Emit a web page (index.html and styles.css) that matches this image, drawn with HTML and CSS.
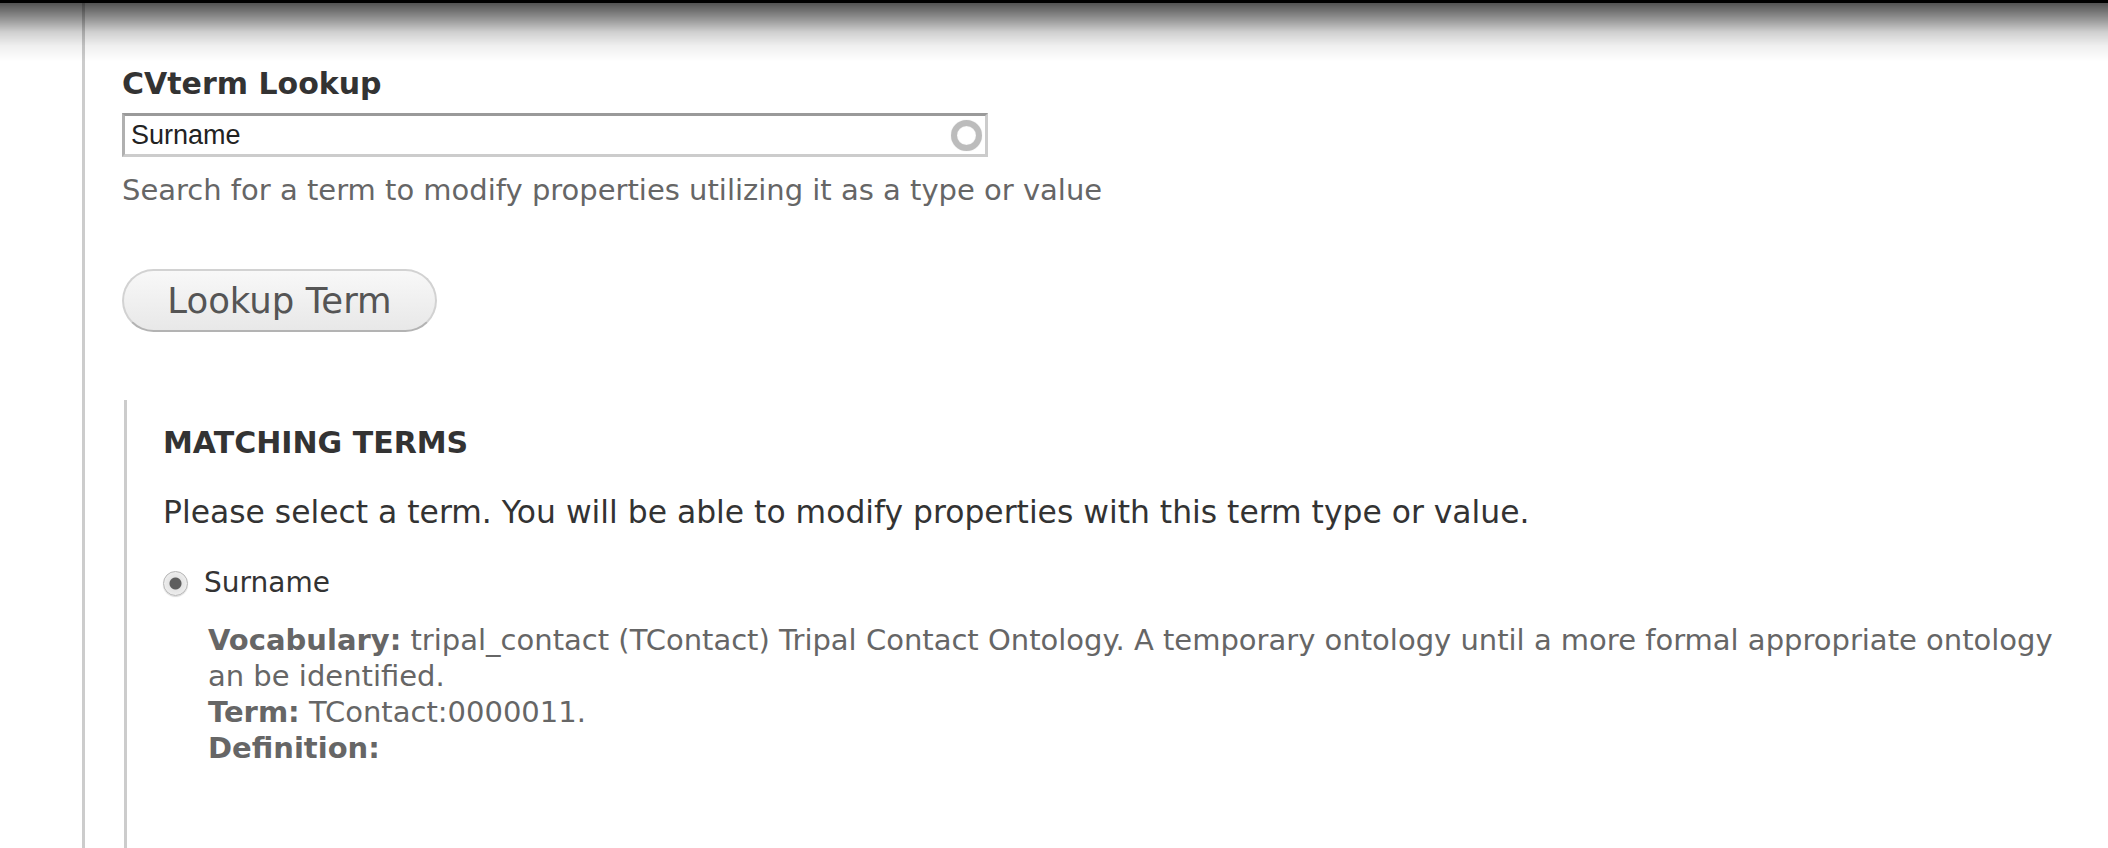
FILE: index.html
```html
<!DOCTYPE html>
<html lang="en">
<head>
<meta charset="utf-8">
<title>CVterm Lookup</title>
<link rel="stylesheet" href="styles.css">
</head>
<body>
<div class="topshade"></div>
<div class="page">
  <form class="lookup">
    <label class="field-label" for="cvterm">CVterm Lookup</label>
    <div class="autocomplete">
      <input id="cvterm" class="text-input" type="text" value="Surname">
      <span class="throbber"></span>
    </div>
    <div class="field-desc">Search for a term to modify properties utilizing it as a type or value</div>
    <button class="btn" type="button">Lookup Term</button>
    <div class="matches">
      <h2 class="matches-title">MATCHING TERMS</h2>
      <p class="matches-intro">Please select a term. You will be able to modify properties with this term type or value.</p>
      <label class="radio-row"><input type="radio" class="radio" name="term" checked><span>Surname</span></label>
      <div class="term-info">
        <div class="term-line"><b>Vocabulary:</b> tripal_contact (TContact) Tripal Contact Ontology. A temporary ontology until a more formal appropriate ontology an be identified.</div>
        <div class="term-line"><b>Term:</b> TContact:0000011.</div>
        <div class="term-line"><b>Definition:</b></div>
      </div>
    </div>
  </form>
</div>
</body>
</html>
```

FILE: styles.css
```css
html, body {
  margin: 0;
  padding: 0;
  background: #fff;
  overflow: hidden;
}

body {
  font-family: "DejaVu Sans", "Open Sans", sans-serif;
  color: #333;
}

.topshade {
  position: fixed;
  top: 0;
  left: 0;
  right: 0;
  height: 62px;
  z-index: 10;
  pointer-events: none;
  background: linear-gradient(to bottom,
    #000 0, #000 3px,
    rgba(0,0,0,0.68) 3px,
    rgba(0,0,0,0.40) 20px,
    rgba(0,0,0,0.19) 32px,
    rgba(0,0,0,0.06) 46px,
    rgba(0,0,0,0) 62px);
}

.page {
  margin-left: 82px;
  border-left: 3px solid #cccccc;
  min-height: 848px;
  box-sizing: border-box;
  padding: 64px 23px 0 37px;
}

.field-label {
  display: block;
  font-size: 30px;
  font-weight: 700;
  line-height: 40px;
  color: #333;
}

.autocomplete {
  position: relative;
  width: 866px;
  margin-top: 9px;
}

.text-input {
  display: block;
  box-sizing: border-box;
  width: 100%;
  height: 44px;
  margin: 0;
  border: 3px solid;
  border-color: #9a9a9a #cccccc #cccccc #b0b0b0;
  padding: 0 6px;
  font-family: "Liberation Sans", Arial, sans-serif;
  font-size: 27px;
  color: #222;
  outline: none;
  background: #fff;
}

.throbber {
  position: absolute;
  right: 6px;
  top: 50%;
  width: 31px;
  height: 31px;
  margin-top: -15px;
  box-sizing: border-box;
  border-radius: 50%;
  border: 6px solid #bcbcbc;
  box-shadow: 0 0 1px #d0d0d0, inset 0 0 1px #d0d0d0;
}

.field-desc {
  margin-top: 15px;
  font-size: 29px;
  line-height: 36px;
  color: #666;
}

.btn {
  display: block;
  margin-top: 61px;
  width: 315px;
  height: 63px;
  padding: 0;
  border-radius: 32px;
  border: 2px solid #d2d2d2;
  border-bottom-color: #b3b3b3;
  background: linear-gradient(to bottom, #f8f8f8, #e8e8e8);
  font-family: "DejaVu Sans", sans-serif;
  font-size: 35.5px;
  color: #555;
}

.matches {
  margin-top: 68px;
  margin-left: 2px;
  border-left: 3px solid #cccccc;
  padding: 23px 0 120px 36px;
}

.matches-title {
  margin: 0;
  font-size: 30px;
  font-weight: 700;
  line-height: 40px;
  color: #333;
}

.matches-intro {
  margin: 31px 0 0;
  font-size: 31.4px;
  line-height: 36px;
  color: #333;
}

.radio-row {
  display: flex;
  align-items: center;
  gap: 16px;
  margin-top: 35px;
  font-size: 28px;
  line-height: 36px;
  color: #333;
}

.radio {
  -webkit-appearance: none;
  appearance: none;
  margin: 0;
  width: 25px;
  height: 25px;
  border-radius: 50%;
  border: 1px solid #b5b5b5;
  background: radial-gradient(circle, #5e5e5e 0, #5e5e5e 5.5px, #e4e4e4 6.5px, #f6f6f6 100%);
  box-shadow: 0 1px 1px rgba(0,0,0,0.15);
}

.term-info {
  margin-top: 21px;
  padding-left: 45px;
  font-size: 29px;
  line-height: 36px;
  color: #666;
}

.term-line b {
  font-weight: 700;
}
```
